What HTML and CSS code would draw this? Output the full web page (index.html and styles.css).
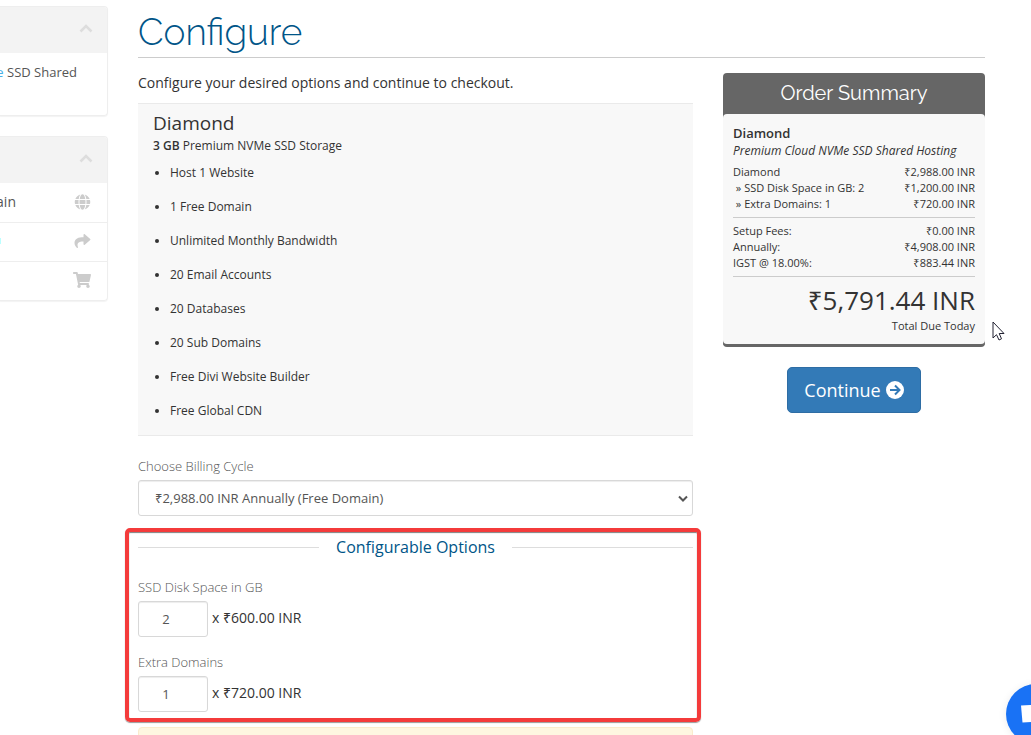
FILE: index.html
```
<!DOCTYPE html>
<html lang="en">
<head>
    <meta charset="UTF-8">
    <title>Configure</title>
    <link rel="stylesheet" href="styles.css">
</head>
<body>
<div class="page">
    <aside class="sidebar">
        <div class="panel">
            <div class="panel-heading">
                <svg class="chevron" viewBox="0 0 14 9"><path d="M1.5 7.5 7 2l5.5 5.5"/></svg>
            </div>
            <div class="panel-category"><a href="#"><span class="accent">e</span> SSD Shared</a></div>
        </div>
        <div class="panel">
            <div class="panel-heading">
                <svg class="chevron" viewBox="0 0 14 9"><path d="M1.5 7.5 7 2l5.5 5.5"/></svg>
            </div>
            <a class="panel-item" href="#">
                <span>ain</span>
                <svg class="icon" viewBox="0 0 496 512"><path d="M336.500 160C322 70.700 287.800 8 248 8s-74 62.700-88.500 152h177zM152 256c0 22.200 1.200 43.500 3.300 64h185.300c2.100-20.500 3.300-41.800 3.300-64s-1.200-43.500-3.300-64H155.300c-2.100 20.500-3.300 41.800-3.300 64zm324.700-96c-28.600-67.900-86.500-120.400-158-141.600 24.400 33.800 41.200 84.700 50 141.600h108zM177.200 18.400C105.800 39.600 47.800 92.100 19.300 160h108c8.700-56.900 25.500-107.800 49.900-141.600zM487.400 192H372.700c2.100 21 3.300 42.500 3.300 64s-1.200 43-3.300 64h114.600c5.500-20.500 8.600-41.800 8.600-64s-3.100-43.500-8.500-64zM120 256c0-21.500 1.200-43 3.300-64H8.600C3.200 212.500 0 233.800 0 256s3.200 43.500 8.600 64h114.600c-2-21-3.200-42.500-3.200-64zm39.500 96c14.500 89.300 48.700 152 88.500 152s74-62.700 88.500-152h-177zm159.300 141.600c71.400-21.200 129.400-73.700 158-141.600h-108c-8.800 56.900-25.600 107.800-50 141.600zM19.300 352c28.600 67.900 86.500 120.400 158 141.600-24.400-33.800-41.200-84.700-50-141.600h-108z"/></svg>
            </a>
            <a class="panel-item" href="#">
                <span class="item-dot"></span>
                <svg class="icon" viewBox="0 0 512 512"><path d="M503.700 189.800 327.700 37.900C312.300 24.500 288 35.300 288 56v80C127.400 137.900 0 170.100 0 322.300c0 61.400 39.600 122.300 83.300 154.100 13.700 9.900 33.100-2.500 28.100-18.600C66.100 312.800 132.900 274.300 288 272v88c0 20.700 24.300 31.500 39.700 18.200l176-152c11.100-9.600 11.100-26.800 0-36.400z"/></svg>
            </a>
            <a class="panel-item" href="#">
                <span></span>
                <svg class="icon icon-cart" viewBox="0 0 576 512"><path d="m528.100 301.300 47.300-208C578.800 78.300 567.400 64 552 64H159.200l-9.200-44.800C147.800 8 137.900 0 126.500 0H24C10.700 0 0 10.700 0 24v16c0 13.300 10.700 24 24 24h69.900l70.200 343.400C147.300 417.100 136 435.200 136 456c0 30.900 25.100 56 56 56s56-25.100 56-56c0-15.700-6.400-29.800-16.800-40h209.600C430.400 426.200 424 440.300 424 456c0 30.900 25.100 56 56 56s56-25.100 56-56c0-22.200-12.900-41.300-31.600-50.400l5.500-24.300c3.400-15-8-29.300-23.400-29.300H218.100l-6.500-32h293.100c11.200 0 20.900-7.800 23.400-18.700z"/></svg>
            </a>
        </div>
    </aside>

    <main class="main">
        <h1>Configure</h1>
        <form class="columns">
            <div class="options">
                <p class="intro">Configure your desired options and continue to checkout.</p>
                <div class="product-info">
                    <h2>Diamond</h2>
                    <p><b>3 GB</b> Premium NVMe SSD Storage</p>
                    <ul>
                        <li>Host 1 Website</li>
                        <li>1 Free Domain</li>
                        <li>Unlimited Monthly Bandwidth</li>
                        <li>20 Email Accounts</li>
                        <li>20 Databases</li>
                        <li>20 Sub Domains</li>
                        <li>Free Divi Website Builder</li>
                        <li>Free Global CDN</li>
                    </ul>
                </div>

                <div class="form-group">
                    <label for="billingcycle">Choose Billing Cycle</label>
                    <div class="select-wrap">
                        <select id="billingcycle" class="form-control">
                            <option>₹2,988.00 INR Annually (Free Domain)</option>
                        </select>
                        <svg class="select-arrow" viewBox="0 0 10 7"><path d="M1 1.500l4 4 4-4"/></svg>
                    </div>
                </div>

                <section class="configurable">
                    <h3 class="sub-heading"><span>Configurable Options</span></h3>
                    <div class="form-group">
                        <label for="disk">SSD Disk Space in GB</label>
                        <div class="quantity">
                            <input id="disk" class="form-control" type="text" value="2">
                            <span>x ₹600.00 INR</span>
                        </div>
                    </div>
                    <div class="form-group">
                        <label for="domains">Extra Domains</label>
                        <div class="quantity">
                            <input id="domains" class="form-control" type="text" value="1">
                            <span>x ₹720.00 INR</span>
                        </div>
                    </div>
                </section>
                <div class="alert"></div>
            </div>

            <div class="side">
                <div class="order-summary">
                    <h2>Order Summary</h2>
                    <div class="summary-body">
                        <strong class="product-name">Diamond</strong>
                        <em class="product-group">Premium Cloud NVMe SSD Shared Hosting</em>
                        <div class="lines">
                            <div class="line"><span>Diamond</span><span>₹2,988.00 INR</span></div>
                            <div class="line"><span>&nbsp;» SSD Disk Space in GB: 2</span><span>₹1,200.00 INR</span></div>
                            <div class="line"><span>&nbsp;» Extra Domains: 1</span><span>₹720.00 INR</span></div>
                        </div>
                        <div class="lines totals">
                            <div class="line"><span>Setup Fees:</span><span>₹0.00 INR</span></div>
                            <div class="line"><span>Annually:</span><span>₹4,908.00 INR</span></div>
                            <div class="line"><span>IGST @ 18.00%:</span><span>₹883.44 INR</span></div>
                        </div>
                        <div class="total-due">
                            <span class="amount">₹5,791.44 INR</span>
                            <span>Total Due Today</span>
                        </div>
                    </div>
                </div>
                <button class="btn" type="button">
                    Continue
                    <svg viewBox="0 0 18 18"><circle cx="9" cy="9" r="9" fill="#fff"/><path d="M4 9h9M9 4.500 13.500 9 9 13.500" fill="none" stroke="#337ab7" stroke-width="2"/></svg>
                </button>
            </div>
        </form>
    </main>
</div>

<svg class="cursor" viewBox="0 0 13 20"><path d="M1 1v16l3.500-3.300 2.500 5.300 2.500-1.200L7.200 12.500H12z"/></svg>
<button class="chat" type="button" aria-label="Chat">
    <svg viewBox="0 0 30 20"><path d="M0 1.500 28 0v17L1.500 18.500z"/></svg>
</button>
</body>
</html>
```
FILE: styles.css
```
*{
    box-sizing:border-box;
}
body{
    margin:0;
    height:100vh;
    overflow:hidden;
    background:#fff;
    color:#333;
    font-family:"Open Sans", "Noto Sans", sans-serif;
    font-size:14px;
    line-height:20px;
}
h1,h2,h3,p,ul{
    margin:0;
    padding:0;
    font-weight:400;
}
a{
    color:#555;
    text-decoration:none;
}
.page{
    display:flex;
    gap:30px;
    padding-right:46px;
}

/* sidebar */
.sidebar{
    flex:0 0 108px;
    min-width:0;
    padding-top:6px;
}
.panel{
    margin-bottom:20px;
    border:1px solid #eee;
    border-left:0;
    border-radius:0 4px 4px 0;
    box-shadow:0 1px 1px rgba(0,0,0,.05);
    overflow:hidden;
}
.panel-heading{
    display:flex;
    align-items:center;
    justify-content:flex-end;
    height:46px;
    padding:0 14px 4px 0;
    background:#f3f3f3;
}
.chevron{
    width:14px;
    height:9px;
    fill:none;
    stroke:#ddd;
    stroke-width:2.5;
}
.panel-category{
    display:flex;
    justify-content:flex-end;
    height:62px;
    padding:9px 30px 0 0;
    font-size:13px;
    white-space:nowrap;
}
.accent{
    color:#49b0e6;
}
.panel-item{
    display:flex;
    align-items:center;
    justify-content:space-between;
    height:39px;
    padding:0 16px 2px 0;
}
.panel-item + .panel-item{
    border-top:1px solid #eee;
}
.panel-item span{
    display:flex;
    justify-content:flex-end;
    width:16px;
}
.panel-item .item-dot{
    width:1px;
    height:6px;
    background:#bff;
}
.icon{
    width:17px;
    height:16px;
    fill:#ccc;
}
.icon-cart{
    width:18px;
}

/* main column */
.main{
    flex:1;
    min-width:0;
}
h1{
    padding:10px 0 3px;
    border-bottom:1px solid #ccc;
    color:#058;
    font-family:Raleway, Lato, sans-serif;
    font-size:37px;
    font-weight:300;
    line-height:44px;
}
.columns{
    display:grid;
    grid-template-columns:minmax(0, 1fr) 262px;
    gap:30px;
    padding-top:15px;
}
.intro{
    margin-bottom:10px;
}
.product-info{
    margin-bottom:20px;
    padding:7px 15px;
    border-top:1px solid #eaeaea;
    border-bottom:1px solid #eaeaea;
    background:#f8f8f8;
    font-size:12px;
}
.product-info h2{
    margin-bottom:1px;
    font-size:19px;
    line-height:24px;
}
.product-info b{
    font-weight:600;
}
.product-info ul{
    padding:7px 0 7px 17px;
}
.product-info li + li{
    margin-top:14px;
}
.form-group label{
    display:block;
    margin-bottom:4px;
    color:#555;
    font-size:13px;
    font-weight:300;
}
.form-control{
    width:100%;
    height:36px;
    padding:6px 16px;
    border:1px solid #d8d8d8;
    border-radius:3px;
    background:#fff;
    box-shadow:inset 0 1px 1px rgba(0,0,0,.075);
    color:#555;
    font-family:inherit;
    font-size:13px;
    appearance:none;
}
.select-wrap{
    position:relative;
}
.select-arrow{
    position:absolute;
    top:15px;
    right:5px;
    width:10px;
    height:7px;
    fill:none;
    stroke:#555;
    stroke-width:2;
}

/* configurable options, outlined in red */
.configurable{
    margin:12px -8px 5px -13px;
    padding:5px 4px 6px 9px;
    border:4px solid #f43b3b;
    border-radius:5px;
    box-shadow:0 1px 1px rgba(0,0,0,.4), inset 0 1px 1px rgba(0,0,0,.5);
}
.configurable .form-group + .form-group{
    margin-top:15px;
}
.sub-heading{
    display:flex;
    align-items:center;
    gap:17px;
    margin-bottom:20px;
    color:#058;
    font-size:16px;
}
.sub-heading::before,
.sub-heading::after{
    content:"";
    flex:1;
    height:1px;
    background:#ddd;
}
.quantity{
    display:flex;
    gap:4px;
}
.quantity span{
    padding-top:7px;
}
.quantity .form-control{
    width:70px;
    padding:6px 20px 6px 6px;
    text-align:center;
}
.alert{
    height:50px;
    border:1px solid #faebcc;
    border-radius:4px;
    background:#fef6e0;
}

/* order summary */
.order-summary{
    border-bottom:3px solid #666;
    border-radius:4px;
    background:#666;
}
.order-summary h2{
    padding:8px 0 9px;
    color:#fff;
    font-family:Raleway, Lato, sans-serif;
    font-size:20px;
    line-height:24px;
    text-align:center;
}
.summary-body{
    padding:10px;
    border-radius:4px;
    background:#f8f8f8;
    font-size:11px;
    line-height:16px;
}
.product-name,
.product-group{
    display:block;
}
.product-name{
    font-size:13px;
    font-weight:600;
    line-height:18px;
}
.product-group{
    margin-bottom:5px;
    font-size:12px;
    line-height:17px;
}
.line{
    display:flex;
    justify-content:space-between;
}
.totals{
    margin:5px 0;
    padding:5px 0;
    border-top:1px solid #ccc;
    border-bottom:1px solid #ccc;
}
.total-due{
    text-align:right;
}
.total-due span{
    display:block;
}
.total-due .amount{
    font-size:26px;
    line-height:36px;
}
.btn{
    display:flex;
    align-items:center;
    gap:5px;
    height:46px;
    margin:20px auto 0;
    padding:0 16px;
    border:1px solid #2e6da4;
    border-radius:5px;
    background:#337ab7;
    color:#fff;
    font-family:inherit;
    font-size:18px;
}
.btn svg{
    width:18px;
    height:18px;
}

/* things floating over the page */
.cursor{
    position:absolute;
    left:992px;
    top:321px;
    width:13px;
    height:20px;
    fill:#fff;
    stroke:#223;
}
.chat{
    position:fixed;
    right:-35px;
    bottom:-9px;
    width:60px;
    height:60px;
    padding:0 0 0 15px;
    border:0;
    border-radius:50%;
    background:#1972f5;
    box-shadow:0 1px 8px rgba(0,0,0,.08);
}
.chat svg{
    display:block;
    width:30px;
    height:20px;
    fill:#fff;
}
```
